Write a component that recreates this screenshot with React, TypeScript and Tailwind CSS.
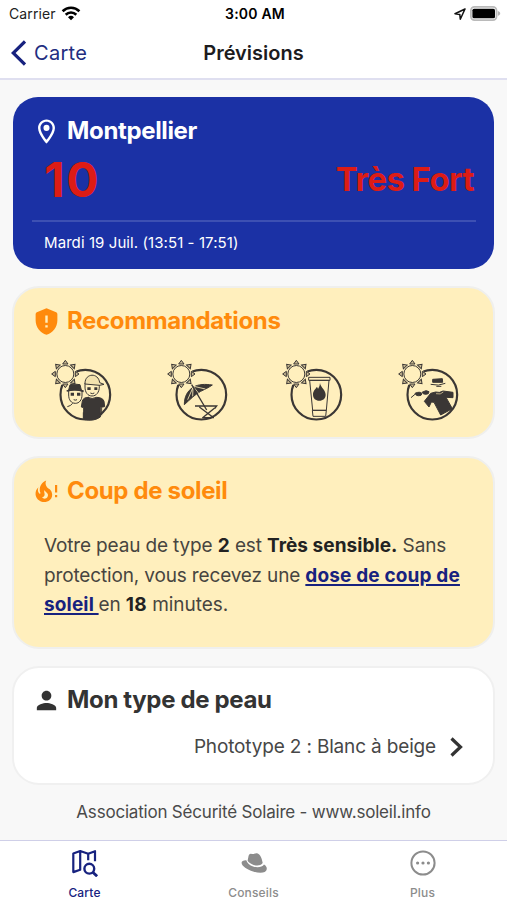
import React from 'react';
import { MdOutlineLocationOn, MdPerson } from 'react-icons/md';

const WifiIcon = () => (
  <svg width="20" height="15" viewBox="0 0 20 15" fill="none" stroke="#000" strokeWidth="2.6">
    <path d="M1.6 5.2a12 12 0 0 1 16.8 0" />
    <path d="M4.7 8.7a7.6 7.6 0 0 1 10.6 0" />
    <path d="M10 14.2 7 11.2a4.3 4.3 0 0 1 6 0z" fill="#000" stroke="none" />
  </svg>
);

const LocationArrow = () => (
  <svg width="12" height="12" viewBox="0 0 12 12" fill="none" stroke="#111" strokeWidth="1.5" strokeLinejoin="round">
    <path d="M11 1 1 5.800l4.800.600.500 4.800z" />
  </svg>
);

const Battery = () => (
  <svg width="31" height="15" viewBox="0 0 31 15">
    <rect x="0.9" y="0.9" width="25.6" height="13.2" rx="3.6" fill="#fff" stroke="#bababa" strokeWidth="1.8" />
    <rect x="2.4" y="2.7" width="22.600" height="9.600" rx="1.6" fill="#000" />
    <path d="M27.800 5v4.800c1.600-.6 2.400-1.400 2.400-2.400S29.400 5.600 27.800 5z" fill="#b5b5b5" />
  </svg>
);

const ShieldAlert = () => (
  <svg width="29" height="29" viewBox="0 0 24 24" fill="currentColor">
    <path
      fillRule="evenodd"
      d="M12 1 4 4.300Q3 4.700 3 6v5c0 5.550 3.840 10.740 9 12 5.160-1.260 9-6.450 9-12V6q0-1.300-1-1.700zM11 7h2v6h-2zM11 15h2v2h-2z"
    />
  </svg>
);

const FireAlert = () => (
  <svg width="29" height="29" viewBox="0 0 29 29" fill="currentColor">
    <g transform="translate(-2.4 0) scale(1.19)">
      <path d="M17.66 11.2C17.43 10.9 17.15 10.64 16.89 10.38C16.22 9.78 15.46 9.35 14.82 8.72C13.33 7.26 13 4.85 13.95 3C13 3.23 12.17 3.75 11.46 4.32C8.87 6.4 7.85 10.07 9.07 13.22C9.11 13.32 9.15 13.42 9.15 13.55C9.15 13.77 9 13.97 8.8 14.05C8.57 14.15 8.33 14.09 8.14 13.93C8.08 13.88 8.04 13.83 8 13.76C6.87 12.33 6.69 10.28 7.45 8.64C5.78 10 4.87 12.3 5 14.47C5.06 14.97 5.12 15.47 5.29 15.97C5.43 16.57 5.7 17.17 6 17.7C7.08 19.43 8.95 20.67 10.96 20.92C13.1 21.19 15.39 20.8 17.03 19.32C18.86 17.66 19.5 15 18.56 12.72L18.43 12.46C18.22 12 17.66 11.2 17.66 11.2M14.5 17.5C14.22 17.74 13.76 18 13.4 18.1C12.28 18.5 11.16 17.94 10.5 17.28C11.69 17 12.4 16.12 12.61 15.23C12.78 14.43 12.46 13.77 12.33 13C12.21 12.26 12.23 11.63 12.5 10.94C12.69 11.32 12.89 11.7 13.13 12C13.9 13 15.11 13.44 15.37 14.8C15.41 14.94 15.43 15.08 15.43 15.23C15.46 16.05 15.1 16.95 14.5 17.5Z" />
    </g>
    <path d="M23 8h2.200v7.500H23zM23 18h2.200v2.300H23z" />
  </svg>
);

const rays = [0, 45, 90, 135, 180, 225, 270, 315];

// Ring with a small sun on its upper left edge, shared by every advice
const SunBadge = ({ children }: { children: React.ReactNode }) => (
  <svg width="66" height="66" viewBox="30 24 198 198" fill="none" stroke="#3b3735" strokeWidth="3">
    <circle cx="136" cy="134" r="74.500" strokeWidth="6.500" />
    {children}
    <circle cx="76" cy="72" r="34" fill="#ffefbd" stroke="none" />
    {rays.map((angle) => (
      <path key={angle} d="M68 42 76 31 84 42z" fill="#cbbb92" transform={`rotate(${angle} 76 72)`} />
    ))}
    <circle cx="76" cy="72" r="25.500" fill="#ffefbd" />
  </svg>
);

const PeopleAdvice = () => (
  <SunBadge>
    <path d="M86 120v15c0 15 8 25 20 25s20-10 20-25v-15" />
    <path d="M80 123q26-7 51 1" strokeWidth="5" />
    <path d="M86 120 90 104q16-3 30 0l4 16q-20-4-38 0z" fill="#3b3735" />
    <path d="M92 133h10M111 133h10" strokeWidth="9" />
    <path d="M101 149q5 3 10 0M82 170q10-2 16-10M130 205v-18" />
    <path d="M135 99v12c0 16 8 27 21 27s22-11 22-28v-10" />
    <path d="M135 99c1-30 40-32 44-1l13 5-13 3-44-4z" fill="#f3e2ae" />
    <path d="M142 116h10M163 116h9" strokeWidth="8" />
    <path d="M151 129q6 4 12 0" />
    <path d="M144 142q12 7 26 0 19 1 22 12l2 16-13 2v29q-21 15-50 7v-35l-7-2 3-18q3-11 19-11z" fill="#3b3735" />
    <path d="M185 172v24" />
  </SunBadge>
);

const ParasolAdvice = () => (
  <SunBadge>
    <path d="M85 164c0-24 9-41 26-52 16-10 37-10 58-7-12 8-22 13-35 19-17 9-32 25-49 40z" fill="#3b3735" />
    <path d="m111 112-16 37M111 112l-1 27M113 111l15 19M114 109l34 8" stroke="#ffefbd" strokeWidth="2.500" />
    <path d="m107 104 45 76" strokeWidth="4" />
    <path d="M117 168h65l-6 8M130 171l43 32M176 174l-37 30M140 203h34" strokeWidth="4" />
  </SunBadge>
);

const CreamAdvice = () => (
  <SunBadge>
    <path d="M113 82h64v9h-64zM116 91l9 90h41l8-90zM124 181l2 18h38l2-18z" fill="#ffefbd" />
    <path d="M147 99c2 14 17 20 17 35 0 11-8 18-19 18s-19-7-19-18c0-12 7-15 11-23q4 2 4 6 6-9 6-18z" fill="#3b3735" stroke="none" />
  </SunBadge>
);

const ClothesAdvice = () => (
  <SunBadge>
    <path d="m137 88 29-2 1 11h-30z" fill="#3b3735" />
    <path d="M131 103q24 6 44-3M148 109h15" />
    <path d="m72 143 13-11" />
    <path d="M84 130q15-7 21 1l-3 5q-15 4-18-6zM105 127q13-9 21-2l-2 6q-14 5-19-4z" fill="#3b3735" />
    <path d="m112 154 19-24 15-4q11 4 22-3l30 4v16l-21-1 19 34-35 19-20-38-8-1-7 15z" fill="#3b3735" />
    <path d="M147 131q14 4 22-5" stroke="#b9aa85" />
  </SunBadge>
);

const MapSearch = () => (
  <svg width="28" height="28" viewBox="0 0 28 28" fill="none" stroke="currentColor" strokeWidth="2.200" strokeLinejoin="round">
    <path d="M9.200 2 2.300 4.500v18.600l6.900-2.400zM9.200 2l8 2.800L24 2.200v10M17.200 4.800v6.500" />
    <circle cx="18.300" cy="19.700" r="4.900" strokeWidth="2.400" />
    <path d="m21.800 23.200 4.300 4.100" strokeWidth="2.800" />
  </svg>
);

const HatIcon = () => (
  <svg width="28" height="28" viewBox="0 0 28 28" fill="currentColor">
    <path d="M7.600 11.800 8.300 8.300C8.600 6 9.300 4.700 10.800 4.700c1.200 0 2 .5 3 .3 1.200-.4 2.500-1 3.800-.5 2.800 1 4.300 5 5.100 9.600-2.300 2.800-5.700 3-9.100 1.800-3-1-5-2.400-6-4.100z" />
    <path d="M6.300 11.300c-2.800-.2-4.900.9-4.700 2.700.3 3.300 5.500 6.500 11.500 8.400 4.500 1.500 9.200 1.700 11.600.5 2.100-1 2.500-3.400 1.700-5-.5-1.100-1.300-1.900-2.400-2.300-1.700 2.600-6.300 3.500-10.900 2-3.500-1.100-5.900-3.300-6.800-6.300z" />
  </svg>
);

const MoreIcon = () => (
  <svg width="28" height="28" viewBox="0 0 28 28" fill="currentColor">
    <circle cx="14" cy="14" r="11.600" fill="none" stroke="currentColor" strokeWidth="2" />
    <circle cx="8.600" cy="14" r="1.600" />
    <circle cx="14" cy="14" r="1.600" />
    <circle cx="19.400" cy="14" r="1.600" />
  </svg>
);

const tabs = [
  { label: 'Carte', icon: MapSearch, color: 'text-[#17227f]' },
  { label: 'Conseils', icon: HatIcon, color: 'text-[#8c8c8c]' },
  { label: 'Plus', icon: MoreIcon, color: 'text-[#8c8c8c]' },
];

interface CardTitleProps {
  icon: React.ReactNode;
  children: React.ReactNode;
}

const CardTitle = ({ icon, children }: CardTitleProps) => (
  <div className="flex h-[30px] items-center gap-[6px]">
    {icon}
    <h2 className="text-2xl leading-[30px] font-bold tracking-[-0.35px] whitespace-nowrap">{children}</h2>
  </div>
);

export default function App() {
  return (
    <div className="flex h-[900px] w-[507px] flex-col overflow-hidden bg-[#f8f8f8] font-['Inter',sans-serif] text-[#333]">
      <header className="h-20 shrink-0 border-b-2 border-[#dfdff0] bg-white">
        <div className="grid h-[27px] grid-cols-3 items-center pr-[6px] pl-[9px] text-sm text-[#222]">
          <div className="flex items-center gap-[5px]">
            <span className="tracking-[0.1px]">Carrier</span>
            <WifiIcon />
          </div>
          <span className="text-center font-semibold tracking-[0.2px] text-black">3:00 AM</span>
          <div className="flex items-center justify-end gap-1">
            <LocationArrow />
            <Battery />
          </div>
        </div>
        <div className="grid h-[51px] grid-cols-3 items-center text-xl">
          <button className="flex items-center gap-2 pl-[11px] tracking-[0.3px] text-[#222d80]">
            <svg width="15" height="26" viewBox="0 0 15 26" fill="none" stroke="#17227f" strokeWidth="3.200">
              <path d="M14 1.500 2.200 13 14 24.500" />
            </svg>
            Carte
          </button>
          <h1 className="text-center font-semibold text-[#1c1c1e]">Prévisions</h1>
        </div>
      </header>

      <main className="flex flex-1 flex-col gap-[17px] px-3 pt-[17px]">
        <section className="mx-px h-[172px] rounded-[25px] bg-[#1b31a5] px-[19px] pt-[19px] text-white">
          <CardTitle icon={<MdOutlineLocationOn size={29} />}>Montpellier</CardTitle>
          <div className="flex h-[74px] items-center justify-between pr-[1px] pb-[7px] pl-3 font-bold text-[#dd1c15]">
            <span className="text-5xl tracking-[1.5px]">10</span>
            <span className="text-[33px] tracking-[-0.6px]">Très Fort</span>
          </div>
          <div className="-mr-px border-t-2 border-[#3d50b3] pt-[9px] pl-3 text-[15px] leading-6 tracking-[0.08px]">
            Mardi 19 Juil. (13:51 - 17:51)
          </div>
        </section>

        <section className="h-[153px] rounded-[27px] border-2 border-[#efefed] bg-[#ffefbd] px-[18px] pt-[18px]">
          <div className="text-[#ff8a0c]">
            <CardTitle icon={<ShieldAlert />}>Recommandations</CardTitle>
          </div>
          <div className="flex justify-between pt-[22px] pr-[12px] pl-[18px]">
            <PeopleAdvice />
            <ParasolAdvice />
            <CreamAdvice />
            <ClothesAdvice />
          </div>
        </section>

        <section className="h-[193px] rounded-[27px] border-2 border-[#efefed] bg-[#ffefbd] px-[18px] pt-[18px]">
          <div className="text-[#ff8a0c]">
            <CardTitle icon={<FireAlert />}>Coup de soleil</CardTitle>
          </div>
          <p className="pt-[25px] pl-3 text-[19px] leading-[29.5px] tracking-[-0.15px] whitespace-nowrap text-[#474540]">
            Votre peau de type <b className="font-bold tracking-[0.05px] text-[#222]">2</b> est{' '}
            <b className="font-bold tracking-[0.05px] text-[#222]">Très sensible.</b> Sans
            <br />
            protection, vous recevez une{' '}
            <a className="font-bold tracking-[0.15px] text-[#17227f] underline decoration-2 underline-offset-2">
              dose de coup de
            </a>
            <br />
            <a className="font-bold tracking-[0.15px] text-[#17227f] underline decoration-2 underline-offset-2">soleil </a>
            en <b className="font-bold tracking-[0.3px] text-[#222]">18</b>{' '}
            <span className="tracking-[-0.05px]">minutes.</span>
          </p>
        </section>

        <section className="h-[119px] rounded-[27px] border-2 border-[#f0f0f0] bg-white px-[18px] pt-[17px]">
          <CardTitle icon={<MdPerson size={29} />}>Mon type de peau</CardTitle>
          <div className="flex items-center justify-end gap-[14px] pt-[18px] pr-[12px] text-[19px] leading-[28px] tracking-[-0.16px] text-[#474747]">
            <span>Phototype 2 : Blanc à beige</span>
            <svg width="13" height="20" viewBox="0 0 13 20" fill="none" stroke="#333" strokeWidth="3.200">
              <path d="m1.500 1.500 9 8.500-9 8.500" />
            </svg>
          </div>
        </section>

        <p className="-mt-[2px] text-center text-[17px] leading-6 tracking-[-0.2px] whitespace-nowrap text-[#4a4a4a]">
          Association Sécurité Solaire - www.soleil.info
        </p>
      </main>

      <nav className="grid h-[60px] shrink-0 grid-cols-3 border-t border-[#cfcfe8] bg-white">
        {tabs.map(({ label, icon: Icon, color }) => (
          <button key={label} className={`flex flex-col items-center pt-2 ${color}`}>
            <Icon />
            <span className="mt-2 text-xs leading-4 font-medium tracking-[0.15px]">{label}</span>
          </button>
        ))}
      </nav>
    </div>
  );
}
